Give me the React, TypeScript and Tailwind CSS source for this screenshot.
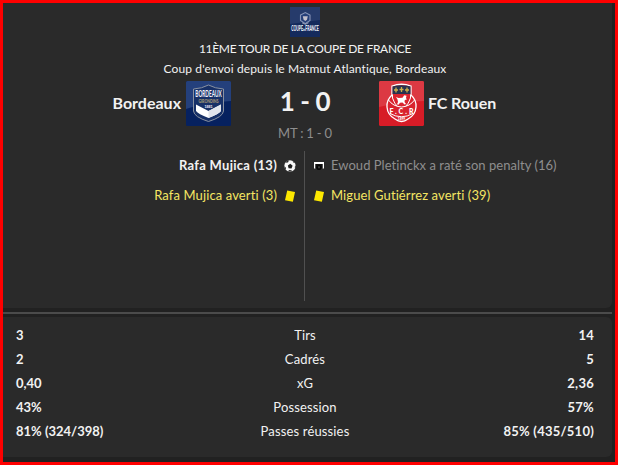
import React from 'react';

interface Stat {
  label: string;
  home: string;
  away: string;
}

const stats: Stat[] = [
  { label: 'Tirs', home: '3', away: '14' },
  { label: 'Cadrés', home: '2', away: '5' },
  { label: 'xG', home: '0,40', away: '2,36' },
  { label: 'Possession', home: '43%', away: '57%' },
  { label: 'Passes réussies', home: '81% (324/398)', away: '85% (435/510)' },
];

const CupLogo = () => (
  <svg width="30" height="30" viewBox="0 0 30 30" className="shrink-0">
    <rect width="30" height="30" fill="#142a5c" />
    <path d="M0 0h30v13L0 17z" fill="#263b6b" />
    <path d="M10.500 8l4.800-2.500L20 8v5.500l-4.700 3.200-4.800-3.200z" fill="#263f78" stroke="#8794b7" strokeWidth="1.100" />
    <path d="M12.800 9.200h5l-.8 3.500-1.700 1.200-1.700-1.200z" fill="#c3bfcb" />
    <path d="M12 15.800l3.300 1.500 3.300-1.500" fill="none" stroke="#a9afc4" strokeWidth=".8" />
    <text transform="translate(15 24.200) scale(.53 1)" textAnchor="middle" fontSize="6.500" fontWeight="900" fill="#eceff7">
      COUPE<tspan fontSize="4">de</tspan>FRANCE
    </text>
  </svg>
);

const BordeauxLogo = () => (
  <svg width="45" height="45" viewBox="0 0 45 45" className="shrink-0">
    <rect width="45" height="45" rx="1.500" fill="#06215f" />
    <path d="M0 1.500Q0 0 1.500 0h42Q45 0 45 1.500V20Q20 21 0 28z" fill="#24407c" />
    <path d="M22.500 4Q29 7.500 37.500 8V30Q37 36 22.500 40.500Q8 36 7.500 30V8Q16 7.500 22.500 4z" fill="#173067" stroke="#8991a0" strokeWidth="1" />
    <text transform="translate(22.500 16) scale(.56 1)" textAnchor="middle" fontSize="8.500" fontWeight="700" fill="#f4f6fb">
      BORDEAUX
    </text>
    <text transform="translate(22.500 22) scale(.65 1)" textAnchor="middle" fontSize="5.500" fontWeight="900" fill="#a99b76">
      GIRONDINS
    </text>
    <text x="22.500" y="27" textAnchor="middle" fontSize="3.500" fontWeight="900" fill="#e6eaf3">
      1881
    </text>
    <path d="M10 23.500L22.500 30 35 23.500V30Q33 33 22.500 37Q12 33 10 30z" fill="#fff" />
    <path d="M22.500 30L35 23.500V30Q33 33 22.500 37z" fill="#e2e5ec" />
  </svg>
);

const RouenLogo = () => (
  <svg width="45" height="45" viewBox="0 0 45 45" className="shrink-0">
    <rect width="45" height="45" rx="1.500" fill="#d71c27" />
    <path d="M0 1.500Q0 0 1.500 0h42Q45 0 45 1.500V20Q20 21 0 26z" fill="#dc3943" />
    <path d="M13 5Q22.500 1.500 32 5V14Q37.500 19 37 26Q36.500 34 29 38Q22.500 43 16 38Q8.500 34 8 26Q7.500 19 13 14z" fill="#d9232e" stroke="#fff" strokeWidth="1.300" />
    <path d="M13.500 5.600Q22.500 2.800 31.500 5.600V13h-18z" fill="#27324e" />
    <path d="M17 6.500v5M15 9h4M22.500 6v5M20.500 8.500h4M28 6.500v5M26 9h4" stroke="#cfae49" strokeWidth="1.300" />
    <path d="M9.500 19Q14 25.500 22.500 26Q31 25.500 35.500 19M11 32.500Q22.500 39 34 32.500M13.500 14v3q2 6 5 8.500M31.500 14v3q-2 6-5 8.500" fill="none" stroke="#fff" strokeWidth="1" />
    <path d="M17 16l2.500 1 4-.3 1.700-2.500 2.300.5-.5 2.300.8 1.500-2 .5-.3 2 1.500 2-1.500.5-2-2-2.500.3-1.500 2-1.500-.5 1-2.300-.5-2.500z" fill="#fff" />
    <text x="22.500" y="32.600" textAnchor="middle" fontSize="7" fontWeight="900" fill="#fff" textLength="24" lengthAdjust="spacing">
      F.C.R
    </text>
    <text x="22.500" y="38.600" textAnchor="middle" fontSize="3.200" fontWeight="900" fill="#fff">
      1899
    </text>
  </svg>
);

const BallIcon = () => (
  <svg width="12" height="12" viewBox="0 0 12 12" className="shrink-0">
    <circle cx="6" cy="6" r="5.700" fill="#f8f8f8" />
    <path d="M6.300 3.700l2.300 2-1.100 2.700-2.900-.2-.7-2.800z" fill="#1d1d1d" />
    <path d="M2.500 1.200l2.300-.8-.6 1.800-2 .7zM8.600.8l2.400 2-1.500-.1zM.2 6.300l1.500 1 .3 2.200-1-.6zM11.700 5.200l-.9 1.600.2 2 .8-1.300zM4 11.500l1-1.400 2.500.2.5 1.300z" fill="#292929" />
  </svg>
);

const MissIcon = () => (
  <svg width="12" height="12" viewBox="0 0 12 12" className="shrink-0">
    <path d="M1 2h10v6.500H9.500V4h-7v4.500H1z" fill="#fff" />
    <path d="M2.500 4h7v4.500h-7z" fill="#101010" />
    <circle cx="6" cy="7.500" r="2.500" fill="#050505" />
    <path d="M5 6.400l2 1.800M7 6.400L5 8.200" stroke="#555" strokeWidth=".7" />
  </svg>
);

const CardIcon = () => (
  <svg width="12" height="12" viewBox="0 0 12 12" className="shrink-0">
    <path d="M3.200.4l7.800 1.500-2.100 9.900-7.900-1.500z" fill="#fce700" />
  </svg>
);

export default function App() {
  return (
    <main className="flex h-[465px] w-[618px] flex-col overflow-hidden border-[3px] border-[#fe0000] bg-[#212121] pr-[3px] font-['Lato',sans-serif] text-[13px] text-[#f2f2f2]">
      <section className="flex h-[305px] shrink-0 flex-col rounded-br-[6px] bg-[#2a2a2a] pr-[5px] pt-[4px]">
        <header className="flex flex-col items-center text-[12px]">
          <CupLogo />
          <p className="mt-[2px] h-[20px] whitespace-nowrap leading-[20px] tracking-[-0.33px]">11ÈME TOUR DE LA COUPE DE FRANCE</p>
          <p className="h-[19px] whitespace-nowrap leading-[19px] tracking-[0.12px]">Coup d'envoi depuis le Matmut Atlantique, Bordeaux</p>
        </header>

        <div className="mt-[3px] grid h-[45px] grid-cols-[228px_148px_1fr] items-center whitespace-nowrap">
          <div className="flex items-center justify-end gap-[5px] text-[16px] font-bold">
            <span className="pb-[2px]">Bordeaux</span>
            <BordeauxLogo />
          </div>
          <div className="pb-[5px] text-center text-[26px] font-bold leading-[40px] tracking-[-0.4px]">1 - 0</div>
          <div className="flex items-center gap-[4px] text-[16px] font-bold">
            <RouenLogo />
            <span className="pb-[2px] tracking-[-0.1px]">FC Rouen</span>
          </div>
        </div>
        <p className="h-[14px] text-center leading-[14px] tracking-[-0.2px] text-[#8e8e8e]">MT : 1 - 0</p>

        <div className="mt-[11px] grid h-[150px] grid-cols-[302px_1fr] whitespace-nowrap leading-[28px]">
          <div className="border-r border-[#505050] pr-[8px]">
            <div className="flex h-[30px] items-center justify-end gap-[7px] font-bold">
              <span className="pb-[2px] tracking-[0.28px]">Rafa Mujica (13)</span>
              <BallIcon />
            </div>
            <div className="flex h-[30px] items-center justify-end gap-[7px] text-[#f5e663]">
              <span className="pb-[2px] tracking-[0.12px]">Rafa Mujica averti (3)</span>
              <CardIcon />
            </div>
          </div>
          <div className="pl-[8px]">
            <div className="flex h-[30px] items-center gap-[6px] text-[#8e8e8e]">
              <MissIcon />
              <span className="pb-[2px] tracking-[0.03px]">Ewoud Pletinckx a raté son penalty (16)</span>
            </div>
            <div className="flex h-[30px] items-center gap-[6px] text-[#f5e663]">
              <CardIcon />
              <span className="pb-[2px] tracking-[0.1px]">Miguel Gutiérrez averti (39)</span>
            </div>
          </div>
        </div>
      </section>

      <div className="mt-[4px] h-[2px] shrink-0 bg-[#4b4b4b]" />

      <section className="mt-[3px] h-[140px] shrink-0 rounded-r-[6px] bg-[#2a2a2a] pl-[13px] pr-[18px] pt-[7px]">
        {stats.map((stat) => (
          <div key={stat.label} className="grid h-[24px] grid-cols-[1fr_auto_1fr] items-center whitespace-nowrap">
            <span className="font-bold">{stat.home}</span>
            <span className="tracking-[0.15px]">{stat.label}</span>
            <span className="text-right font-bold tracking-[0.25px]">{stat.away}</span>
          </div>
        ))}
      </section>
    </main>
  );
}
